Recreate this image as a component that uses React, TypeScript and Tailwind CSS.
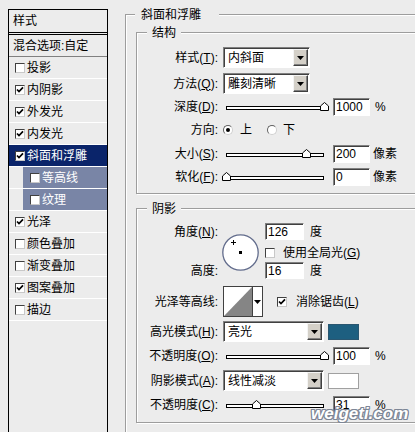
import React from "react";

const FONT = "font-['Liberation_Sans','Noto_Sans_CJK_SC',sans-serif]";

function Check({ checked }: { checked: boolean }) {
  return (
    <span className="w-[10px] h-[10px] shrink-0 bg-white border border-t-[#404040] border-l-[#404040] border-r-[#c8c8c8] border-b-[#c8c8c8] flex items-center justify-center">
      {checked && (
        <svg width="8" height="8" viewBox="0 0 8 8">
          <path d="M1 3.5 L3 5.6 L7 1.4" stroke="#000" strokeWidth="1.7" fill="none" />
        </svg>
      )}
    </span>
  );
}

function Radio({ checked }: { checked: boolean }) {
  return (
    <span className="w-[10px] h-[10px] shrink-0 rounded-full bg-white border border-t-[#606060] border-l-[#606060] border-r-[#d0d0d0] border-b-[#d0d0d0] flex items-center justify-center">
      {checked && <span className="w-[4px] h-[4px] rounded-full bg-black" />}
    </span>
  );
}

function Label({ children }: { children: React.ReactNode }) {
  return <div className="w-[81px] shrink-0 text-right whitespace-nowrap">{children}</div>;
}

function Tri() {
  return (
    <svg width="7" height="4" viewBox="0 0 7 4">
      <path d="M0 0 H7 L3.5 4 Z" fill="#000" />
    </svg>
  );
}

function Select({ w, value }: { w: string; value: string }) {
  return (
    <div
      className={`ml-[5px] h-[21px] shrink-0 bg-white border border-t-[#808080] border-l-[#808080] border-r-white border-b-white shadow-[inset_1px_1px_0_#404040] flex ${w}`}
    >
      <div className="flex-1 flex items-center pl-[4px] whitespace-nowrap">{value}</div>
      <div className="w-[15px] my-[1px] mr-[1px] bg-[#d4d0c8] border border-t-[#f4f4f4] border-l-[#f4f4f4] border-r-[#404040] border-b-[#404040] shadow-[inset_-1px_-1px_0_#808080] flex items-center justify-center">
        <Tri />
      </div>
    </div>
  );
}

function Input({ value, w }: { value: string; w: string }) {
  return (
    <div
      className={`h-full shrink-0 bg-white border border-t-[#808080] border-l-[#808080] border-r-white border-b-white shadow-[inset_1px_1px_0_#404040] pl-[2px] flex items-center ${w}`}
    >
      {value}
    </div>
  );
}

function Slider({ v }: { v: number }) {
  return (
    <div className="relative ml-[4px] w-[106px] h-[18px] shrink-0">
      <div className="mx-[4px] mt-[8px] h-[4px] border border-black bg-white" />
      <svg
        className="absolute top-[4px]"
        style={{ left: `${Math.round(v * 98)}px` }}
        width="9"
        height="9"
        viewBox="0 0 9 9"
      >
        <path d="M0.5 8.5 V4 L4.5 0.5 L8.5 4 V8.5 Z" fill="#fff" stroke="#000" />
      </svg>
    </div>
  );
}

function SliderRow({
  label,
  v,
  value,
  unit,
  mt,
}: {
  label: React.ReactNode;
  v: number;
  value: string;
  unit: string;
  mt: string;
}) {
  return (
    <div className={`flex items-center h-[18px] ${mt}`}>
      <Label>{label}</Label>
      <Slider v={v} />
      <div className="ml-[5px] h-[18px] flex">
        <Input value={value} w="w-[37px]" />
      </div>
      <span className={unit === "%" ? "ml-[5px]" : "ml-[3px]"}>{unit}</span>
    </div>
  );
}

function Group({
  title,
  className,
  legend,
  children,
}: {
  title: string;
  className: string;
  legend: string;
  children?: React.ReactNode;
}) {
  return (
    <div
      className={`relative border border-[#9d9d9d] shadow-[inset_1px_1px_0_#fff,1px_1px_0_#fff] ${className}`}
    >
      <div className={`absolute -top-[8px] h-[16px] bg-[#ececec] flex items-center whitespace-nowrap ${legend}`}>
        {title}
      </div>
      {children}
    </div>
  );
}

const items: { name: string; checked: boolean; kind?: "sel" | "sub" }[] = [
  { name: "投影", checked: false },
  { name: "内阴影", checked: true },
  { name: "外发光", checked: true },
  { name: "内发光", checked: true },
  { name: "斜面和浮雕", checked: true, kind: "sel" },
  { name: "等高线", checked: false, kind: "sub" },
  { name: "纹理", checked: false, kind: "sub" },
  { name: "光泽", checked: true },
  { name: "颜色叠加", checked: false },
  { name: "渐变叠加", checked: false },
  { name: "图案叠加", checked: true },
  { name: "描边", checked: false },
];

function LeftPanel() {
  return (
    <div className="ml-[8px] mt-[9px] w-[100px] h-[430px] shrink-0 border-x border-t border-black flex flex-col">
      <div className="h-[23px] shrink-0 border-b border-black flex items-center pl-[4px]">样式</div>
      <div className="h-[1px] shrink-0" />
      <div className="flex-1 border-t border-black flex flex-col">
        <div className="h-[22px] shrink-0 border-b border-[#808080] flex items-center pl-[4px] whitespace-nowrap">
          混合选项:自定
        </div>
        {items.map((it) =>
          it.kind === "sub" ? (
            <div key={it.name} className="h-[22px] shrink-0 border-b border-white flex">
              <div className="ml-[14px] flex-1 bg-[#7985a6] text-white flex items-center pl-[7px] gap-[2px]">
                <Check checked={it.checked} />
                <span>{it.name}</span>
              </div>
            </div>
          ) : (
            <div
              key={it.name}
              className={`h-[22px] shrink-0 border-b border-white flex items-center pl-[6px] gap-[2px] ${
                it.kind === "sel" ? "bg-[#0a246a] text-white" : ""
              }`}
            >
              <Check checked={it.checked} />
              <span className="whitespace-nowrap">{it.name}</span>
            </div>
          )
        )}
      </div>
    </div>
  );
}

function RightPanel() {
  return (
    <div className="ml-[17px] mt-[14px] w-[330px] shrink-0">
      <Group title="斜面和浮雕" className="h-[430px] pl-[10px] pt-[17px]" legend="left-[9px] pl-[6px] pr-[18px]">
        <Group title="结构" className="w-[300px] h-[162px] pt-[14px] flex flex-col" legend="left-[10px] px-[5px]">
          <div className="flex items-center h-[21px]">
            <Label>
              样式(<u>T</u>):
            </Label>
            <Select w="w-[87px]" value="内斜面" />
          </div>
          <div className="flex items-center h-[21px] mt-[5px]">
            <Label>
              方法(<u>Q</u>):
            </Label>
            <Select w="w-[87px]" value="雕刻清晰" />
          </div>
          <SliderRow
            mt="mt-[4px]"
            label={
              <>
                深度(<u>D</u>):
              </>
            }
            v={1}
            value="1000"
            unit="%"
          />
          <div className="flex items-center h-[18px] mt-[5px]">
            <Label>方向:</Label>
            <span className="ml-[5px]">
              <Radio checked />
            </span>
            <span className="ml-[7px]">上</span>
            <span className="ml-[15px]">
              <Radio checked={false} />
            </span>
            <span className="ml-[6px]">下</span>
          </div>
          <SliderRow
            mt="mt-[6px]"
            label={
              <>
                大小(<u>S</u>):
              </>
            }
            v={0.82}
            value="200"
            unit="像素"
          />
          <SliderRow
            mt="mt-[5px]"
            label={
              <>
                软化(<u>F</u>):
              </>
            }
            v={0}
            value="0"
            unit="像素"
          />
        </Group>

        <Group title="阴影" className="w-[300px] h-[215px] mt-[14px] pt-[14px] flex flex-col" legend="left-[10px] px-[5px]">
          <div className="flex h-[56px]">
            <div className="w-[81px] shrink-0 flex flex-col text-right">
              <div className="h-[17px] flex items-center justify-end whitespace-nowrap">
                角度(<u>N</u>):
              </div>
              <div className="h-[17px] mt-[22px] flex items-center justify-end">高度:</div>
            </div>
            <div className="ml-[4px] mt-[11px] w-[37px] h-[37px] shrink-0">
              <svg width="37" height="37" viewBox="0 0 37 37">
                <circle cx="18.5" cy="18.5" r="17.7" fill="#fff" stroke="#626c8c" strokeWidth="1.3" />
                <rect x="17" y="17" width="3" height="3" fill="#000" />
                <path d="M11.5 6 V11 M9 8.5 H14" stroke="#000" strokeWidth="1" />
              </svg>
            </div>
            <div className="ml-[6px] flex flex-col">
              <div className="h-[17px] flex items-center">
                <Input value="126" w="w-[39px]" />
                <span className="ml-[6px]">度</span>
              </div>
              <div className="h-[11px] mt-[7px] flex items-center">
                <Check checked={false} />
                <span className="ml-[8px] whitespace-nowrap">
                  使用全局光(<u>G</u>)
                </span>
              </div>
              <div className="h-[17px] mt-[4px] flex items-center">
                <Input value="16" w="w-[39px]" />
                <span className="ml-[6px]">度</span>
              </div>
            </div>
          </div>

          <div className="flex items-center h-[31px] mt-[7px]">
            <Label>光泽等高线:</Label>
            <div className="ml-[5px] w-[40px] h-[31px] shrink-0 flex bg-white border border-[#404040]">
              <svg width="28" height="29" viewBox="0 0 28 29" className="shrink-0">
                <path d="M0 29 L28 0 L28 29 Z" fill="#858585" />
              </svg>
              <div className="w-[1px] bg-[#404040]" />
              <div className="flex-1 flex items-center justify-center">
                <Tri />
              </div>
            </div>
            <span className="ml-[14px]">
              <Check checked />
            </span>
            <span className="ml-[9px] whitespace-nowrap">
              消除锯齿(<u>L</u>)
            </span>
          </div>

          <div className="flex items-center h-[21px] mt-[4px]">
            <Label>
              高光模式(<u>H</u>):
            </Label>
            <Select w="w-[101px]" value="亮光" />
            <div className="ml-[4px] w-[31px] h-[16px] bg-[#1d5f80] border border-[#2a5670]" />
          </div>
          <SliderRow
            mt="mt-[5px]"
            label={
              <>
                不透明度(<u>O</u>):
              </>
            }
            v={1}
            value="100"
            unit="%"
          />
          <div className="flex items-center h-[21px] mt-[5px]">
            <Label>
              阴影模式(<u>A</u>):
            </Label>
            <Select w="w-[101px]" value="线性减淡" />
            <div className="ml-[4px] w-[31px] h-[16px] bg-white border border-[#a0a0a0]" />
          </div>
          <SliderRow
            mt="mt-[5px]"
            label={
              <>
                不透明度(<u>C</u>):
              </>
            }
            v={0.31}
            value="31"
            unit="%"
          />
        </Group>
      </Group>
    </div>
  );
}

export default function App() {
  return (
    <div
      className={`${FONT} w-[415px] h-[432px] overflow-hidden bg-[#ececec] text-[12px] leading-none text-black flex relative`}
    >
      <LeftPanel />
      <RightPanel />
      <div className="absolute left-[311px] top-[405px] text-[17px] font-bold italic text-white leading-none [text-shadow:1px_1px_0_#7d8696,-1px_-1px_0_#7d8696,1px_-1px_0_#7d8696,-1px_1px_0_#7d8696,0_1px_0_#7d8696,0_-1px_0_#7d8696,1px_0_0_#7d8696,-1px_0_0_#7d8696]">
        weigeti.com
      </div>
    </div>
  );
}
